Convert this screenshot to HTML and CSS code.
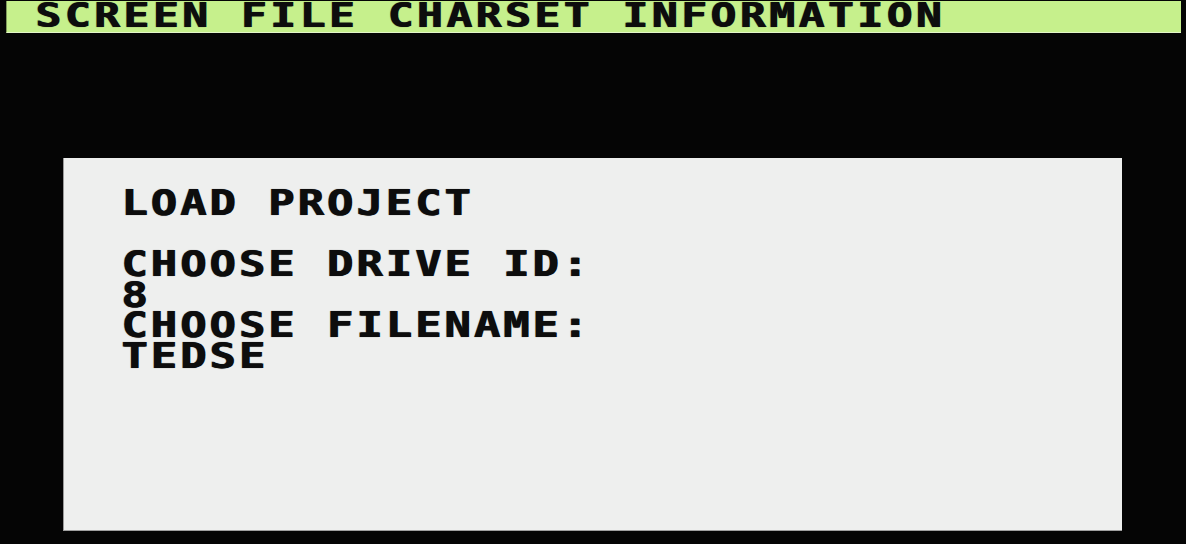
FILE: index.html
```html
<!DOCTYPE html>
<html lang="en">
<head>
<meta charset="utf-8">
<title>Load Project</title>
<link rel="stylesheet" href="styles.css">
</head>
<body>
<div class="screen">
  <div class="titlebar"><span class="txt">SCREEN FILE CHARSET INFORMATION</span></div>
  <div class="panel">
    <div class="row"><span class="txt">LOAD PROJECT</span></div>
    <div class="row"></div>
    <div class="row"><span class="txt">CHOOSE DRIVE ID:</span></div>
    <div class="row"><span class="txt">8</span></div>
    <div class="row"><span class="txt">CHOOSE FILENAME:</span></div>
    <div class="row"><span class="txt">TEDSE</span></div>
  </div>
</div>
</body>
</html>
```
FILE: styles.css
```css
html, body {
  margin: 0;
  padding: 0;
  background: #050505;
}
body {
  width: 1186px;
  height: 544px;
  overflow: hidden;
}
.screen {
  display: flex;
  flex-direction: column;
  font-family: "DejaVu Sans Mono", "Liberation Mono", monospace;
  font-weight: bold;
  font-size: 35px;
  color: #0d0d0d;
}
.txt {
  display: inline-block;
  white-space: pre;
  letter-spacing: 2.42px;
  transform: scaleX(1.25);
  transform-origin: 0 0;
  text-shadow: 1px 0 0 #0d0d0d, 0 0 1px rgba(0, 0, 0, 0.45);
}
.titlebar {
  margin: 1px 5px 0 6px;
  height: 32px;
  line-height: 30.2px;
  font-size: 33px;
  padding-left: 28px;
  background: #c6f08c;
  border-left: 1px solid #7f9a5c;
  border-bottom: 1px solid #e4f7c8;
  box-sizing: border-box;
}
.titlebar .txt {
  letter-spacing: 2.71px;
  transform: scaleX(1.3);
}
.panel {
  margin: 125px 0 0 63px;
  width: 1059px;
  height: 373px;
  box-sizing: border-box;
  padding: 30px 0 0 57px;
  background: #eeefee;
  border-left: 1px solid #9a9a9a;
  border-bottom: 1px solid #a0a0a0;
}
.row {
  height: 30.6px;
  line-height: 30.6px;
}
```
